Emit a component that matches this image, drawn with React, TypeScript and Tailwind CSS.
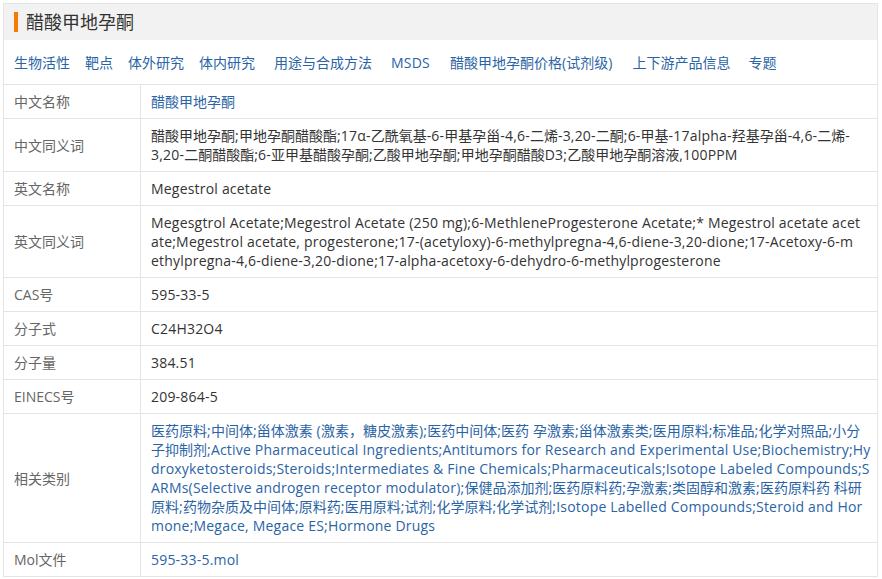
import React from "react";

const FONT = "font-['Open_Sans','Noto_Sans_CJK_SC',sans-serif]";

interface Row {
  label: string;
  lines: string[];
  link?: boolean;
}

const navLinks: { text: string; ml: string }[] = [
  { text: "生物活性", ml: "ml-0" },
  { text: "靶点", ml: "ml-[15px]" },
  { text: "体外研究", ml: "ml-[15px]" },
  { text: "体内研究", ml: "ml-[15px]" },
  { text: "用途与合成方法", ml: "ml-[19px]" },
  { text: "MSDS", ml: "ml-[19px]" },
  { text: "醋酸甲地孕酮价格(试剂级)", ml: "ml-[20px]" },
  { text: "上下游产品信息", ml: "ml-[20px]" },
  { text: "专题", ml: "ml-[18px]" },
];

const rows: Row[] = [
  { label: "中文名称", lines: ["醋酸甲地孕酮"], link: true },
  {
    label: "中文同义词",
    lines: [
      "醋酸甲地孕酮;甲地孕酮醋酸酯;17α-乙酰氧基-6-甲基孕甾-4,6-二烯-3,20-二酮;6-甲基-17alpha-羟基孕甾-4,6-二烯-",
      "3,20-二酮醋酸酯;6-亚甲基醋酸孕酮;乙酸甲地孕酮;甲地孕酮醋酸D3;乙酸甲地孕酮溶液,100PPM",
    ],
  },
  { label: "英文名称", lines: ["Megestrol acetate"] },
  {
    label: "英文同义词",
    lines: [
      "Megesgtrol Acetate;Megestrol Acetate (250 mg);6-MethleneProgesterone Acetate;* Megestrol acetate acet",
      "ate;Megestrol acetate, progesterone;17-(acetyloxy)-6-methylpregna-4,6-diene-3,20-dione;17-Acetoxy-6-m",
      "ethylpregna-4,6-diene-3,20-dione;17-alpha-acetoxy-6-dehydro-6-methylprogesterone",
    ],
  },
  { label: "CAS号", lines: ["595-33-5"] },
  { label: "分子式", lines: ["C24H32O4"] },
  { label: "分子量", lines: ["384.51"] },
  { label: "EINECS号", lines: ["209-864-5"] },
  {
    label: "相关类别",
    link: true,
    lines: [
      "医药原料;中间体;甾体激素 (激素，糖皮激素);医药中间体;医药 孕激素;甾体激素类;医用原料;标准品;化学对照品;小分",
      "子抑制剂;Active Pharmaceutical Ingredients;Antitumors for Research and Experimental Use;Biochemistry;Hy",
      "droxyketosteroids;Steroids;Intermediates & Fine Chemicals;Pharmaceuticals;Isotope Labeled Compounds;S",
      "ARMs(Selective androgen receptor modulator);保健品添加剂;医药原料药;孕激素;类固醇和激素;医药原料药 科研",
      "原料;药物杂质及中间体;原料药;医用原料;试剂;化学原料;化学试剂;Isotope Labelled Compounds;Steroid and Hor",
      "mone;Megace, Megace ES;Hormone Drugs",
    ],
  },
  { label: "Mol文件", lines: ["595-33-5.mol"], link: true },
];

function Mixed({ text }: { text: string }) {
  const parts = text.split(/([\u3000-\u9fff\uff00-\uffef]+)/);
  return (
    <>
      {parts.map((p, i) =>
        /[\u3000-\u9fff\uff00-\uffef]/.test(p) ? (
          <span key={i}>{p}</span>
        ) : (
          <span key={i} className="tracking-[0.2px]">
            {p}
          </span>
        )
      )}
    </>
  );
}

export default function App() {
  return (
    <div className={`${FONT} bg-white w-[882px] h-[579px] overflow-hidden pt-[3px] pl-[3px] pr-[4px]`}>
      <div className="border border-[#e4e4e4] border-b-0">
        {/* Title bar */}
        <div className="h-[36px] bg-[#f2f2f2] flex items-center pl-[10px]">
          <span className="w-[4px] h-[20px] bg-[#f57c00]" />
          <h1 className="ml-[8px] text-[18px] leading-[20px] text-[#333]">醋酸甲地孕酮</h1>
        </div>

        {/* Nav */}
        <div className="h-[44px] flex items-center pl-[10px] text-[14px] text-[#2a64a6]">
          {navLinks.map((l) => (
            <a key={l.text} className={`${l.ml} whitespace-nowrap cursor-pointer`}>
              <Mixed text={l.text} />
            </a>
          ))}
        </div>

        {/* Table */}
        <div className="grid grid-cols-[137px_1fr] border-t border-[#e4e4e4] text-[14px] leading-[19px]">
          {rows.map((r) => (
            <React.Fragment key={r.label}>
              <div className="flex items-center px-[10px] py-[7px] border-r border-b border-[#e4e4e4] text-[#666]">
                {r.label}
              </div>
              <div
                className={`px-[10px] py-[7px] border-b border-[#e4e4e4] overflow-hidden ${
                  r.link ? "text-[#2a64a6]" : "text-[#333]"
                }`}
              >
                {r.lines.map((line, i) => (
                  <div key={i} className="whitespace-nowrap">
                    <Mixed text={line} />
                  </div>
                ))}
              </div>
            </React.Fragment>
          ))}
        </div>
      </div>
    </div>
  );
}
